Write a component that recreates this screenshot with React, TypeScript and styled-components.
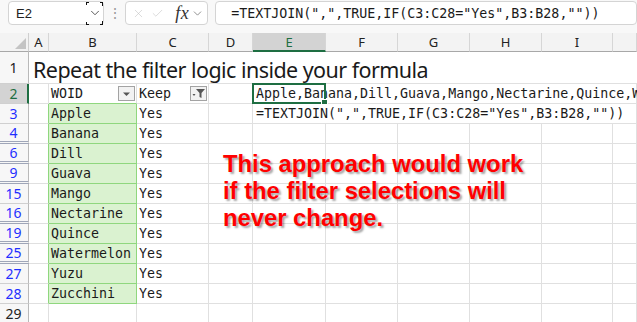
import { Fragment } from "react";
import styled, { createGlobalStyle } from "styled-components";
import { X, Check, ChevronDown } from "lucide-react";

const GREEN = "#1e6e42";
const GRID = "#e0e0e0";
const FILL = "#daf2d0";
const FILL_LINE = "#8fd77e";
const MONO = `"DejaVu Sans Mono", "Liberation Mono", monospace`;
const SANS = `"Liberation Sans", Arial, sans-serif`;

const GlobalStyle = createGlobalStyle`
  html, body {
    margin: 0;
    padding: 0;
    background: #fff;
  }
  body {
    font-family: ${SANS};
    overflow: hidden;
  }
`;

const Window = styled.div`
  position: relative;
  width: 637px;
  height: 322px;
  overflow: hidden;
  display: flex;
  flex-direction: column;
  background: #fff;
`;

/* ---------- formula bar ---------- */

const FormulaBar = styled.div`
  display: flex;
  align-items: flex-start;
  height: 33px;
  box-sizing: border-box;
  padding: 1px 0 0 8px;
  background: #f8f8f8;
  flex-shrink: 0;
`;

const Box = styled.div`
  height: 24px;
  box-sizing: border-box;
  border: 1px solid #d4d4d4;
  border-radius: 4px;
  background: #fff;
  display: flex;
  align-items: center;
`;

const NameBox = styled(Box)`
  width: 100px;
  padding-left: 7px;
  justify-content: space-between;
  font-family: ${SANS};
  font-size: 13px;
  color: #222;
`;

const DropButton = styled.div`
  width: 17px;
  height: 23px;
  display: flex;
  align-items: center;
  justify-content: center;
  color: #444;
  background:
    linear-gradient(#111, #111) left top / 3px 1px no-repeat,
    linear-gradient(#111, #111) left top / 1px 3px no-repeat,
    linear-gradient(#111, #111) left bottom / 3px 1px no-repeat,
    linear-gradient(#111, #111) left bottom / 1px 3px no-repeat,
    linear-gradient(#111, #111) right top / 3px 1px no-repeat,
    linear-gradient(#111, #111) right top / 1px 4px no-repeat,
    linear-gradient(#111, #111) right bottom / 3px 1px no-repeat,
    linear-gradient(#111, #111) right bottom / 1px 4px no-repeat;
`;

const Dots = styled.div`
  width: 22px;
  height: 24px;
  display: flex;
  align-items: center;
  justify-content: center;
  color: #9a9a9a;
  font-size: 14px;
`;

const FxBox = styled(Box)`
  width: 83px;
  padding: 0 3px 0 6px;
  gap: 6px;
  color: #bdbdbd;
`;

const Fx = styled.span`
  font-family: "Liberation Serif", "DejaVu Serif", serif;
  font-style: italic;
  font-size: 18px;
  color: #333;
  margin-left: 5px;
  letter-spacing: 0.5px;
`;

const FxChevron = styled.span`
  display: flex;
  color: #777;
  margin-left: -4px;
`;

const FormulaBox = styled(Box)`
  margin-left: 7px;
  width: 440px;
  padding-left: 15px;
  font-family: ${MONO};
  font-size: 13.3px;
  color: #1a1a1a;
  white-space: nowrap;
`;

/* ---------- sheet ---------- */

const Sheet = styled.div`
  display: grid;
  grid-template-columns: 29px 20px 88px 72px 44px 73px 72px 72px 72px 71px 1fr;
  grid-template-rows: 19px 32px repeat(12, 20px);
`;

const Corner = styled.div`
  background: #f3f3f3;
  border-right: 1px solid #cfcfcf;
  border-bottom: 1px solid #a8a8a8;
  box-sizing: border-box;
  display: flex;
  align-items: flex-end;
  justify-content: flex-end;
  padding: 0 2px 2px 0;
`;

const ColHeader = styled.div<{ $active?: boolean }>`
  box-sizing: border-box;
  background: ${(p) => (p.$active ? "#d3d3d3" : "#f3f3f3")};
  border-right: 1px solid #d6d6d6;
  border-bottom: ${(p) => (p.$active ? `2px solid ${GREEN}` : "1px solid #a8a8a8")};
  color: ${(p) => (p.$active ? GREEN : "#222")};
  font-family: "Noto Sans", ${SANS};
  font-size: 13px;
  display: flex;
  align-items: center;
  justify-content: center;
  padding-top: ${(p) => (p.$active ? "1px" : "0")};
`;

const RowHeader = styled.div<{ $active?: boolean; $filtered?: boolean; $gap?: boolean }>`
  box-sizing: border-box;
  background: ${(p) => (p.$active ? "#d3d3d3" : "#f7f7f7")};
  border-right: ${(p) => (p.$active ? `2px solid ${GREEN}` : "1px solid #b9b9b9")};
  border-bottom: ${(p) => (p.$gap ? "3px double #9fa6b8" : "1px solid #d0d0d0")};
  color: ${(p) => (p.$active ? GREEN : p.$filtered ? "#1f2fff" : "#222")};
  font-family: "Noto Sans", ${SANS};
  font-size: 14px;
  display: flex;
  align-items: center;
  justify-content: center;
  padding-right: ${(p) => (p.$active ? "0" : "1px")};
`;

const Cell = styled.div<{ $fill?: boolean; $greenRight?: boolean; $greenBottom?: boolean }>`
  position: relative;
  box-sizing: border-box;
  background: ${(p) => (p.$fill ? FILL : "#fff")};
  border-right: 1px solid ${(p) => (p.$fill || p.$greenRight ? FILL_LINE : GRID)};
  border-bottom: 1px solid ${(p) => (p.$fill || p.$greenBottom ? FILL_LINE : GRID)};
  font-family: ${MONO};
  font-size: 13.3px;
  line-height: 19px;
  color: #1a1a1a;
  padding-left: 2px;
  white-space: nowrap;
  display: flex;
  align-items: center;
`;

const HeadCell = styled(Cell)`
  justify-content: space-between;
  padding-right: 1px;
`;

const TitleCell = styled.div`
  grid-column: 2 / -1;
  box-sizing: border-box;
  border-bottom: 1px solid ${GRID};
  font-family: "Noto Sans", ${SANS};
  font-size: 21.5px;
  color: #1a1a1a;
  padding: 3px 0 0 4px;
  white-space: nowrap;
  letter-spacing: -0.55px;
`;

const SpillCell = styled(Cell)`
  grid-column: 6 / -1;
  padding-left: 3px;
  overflow: visible;
`;

const Selection = styled.div`
  position: absolute;
  left: -1px;
  top: -1px;
  width: 74px;
  height: 21px;
  box-sizing: border-box;
  border: 2px solid ${GREEN};
  pointer-events: none;

  &::after {
    content: "";
    position: absolute;
    right: -4px;
    bottom: -4px;
    width: 5px;
    height: 5px;
    background: ${GREEN};
    border: 1px solid #fff;
  }
`;

const FilterButton = styled.div`
  width: 17px;
  height: 15px;
  box-sizing: border-box;
  border: 1px solid #a3a3a3;
  background: #f2f2f2;
  display: flex;
  align-items: center;
  justify-content: center;
  color: #555;
`;

const Note = styled.div`
  position: absolute;
  left: 223px;
  top: 150px;
  font-family: ${SANS};
  font-weight: 700;
  font-size: 23.8px;
  line-height: 27px;
  color: #ff0000;
  text-shadow: 2px 2px 2px rgba(0, 0, 0, 0.35);
`;

const COLS = ["A", "B", "C", "D", "E", "F", "G", "H", "I", "J"];

const ROWS = [
  { n: 3, name: "Apple", gap: false },
  { n: 4, name: "Banana", gap: true },
  { n: 6, name: "Dill", gap: true },
  { n: 9, name: "Guava", gap: true },
  { n: 15, name: "Mango", gap: false },
  { n: 16, name: "Nectarine", gap: true },
  { n: 19, name: "Quince", gap: true },
  { n: 25, name: "Watermelon", gap: true },
  { n: 27, name: "Yuzu", gap: false },
  { n: 28, name: "Zucchini", gap: false },
];

const FORMULA = '=TEXTJOIN(",",TRUE,IF(C3:C28="Yes",B3:B28,""))';
const JOINED = ROWS.map((r) => r.name).join(",");

function DropArrow() {
  return (
    <svg width="9" height="6" viewBox="0 0 9 6">
      <path d="M1 1.5 L4.5 5 L8 1.5 Z" fill="#555" />
    </svg>
  );
}

function FilterOn() {
  return (
    <svg width="14" height="11" viewBox="0 0 14 11">
      <path d="M0.5 6 L3.5 6 L2 8 Z" fill="#555" />
      <path d="M4 1 L13 1 L9.5 5 L9.5 10 L7.5 9 L7.5 5 Z" fill="#555" />
    </svg>
  );
}

function CornerMark() {
  return (
    <svg width="11" height="11" viewBox="0 0 11 11">
      <path d="M11 0 L11 11 L0 11 Z" fill="#c4c4c4" />
    </svg>
  );
}

function BlankCells({ from, row }: { from: number; row: number }) {
  return (
    <>
      {COLS.slice(from).map((c) => (
        <Cell key={`${c}${row}`} />
      ))}
    </>
  );
}

export default function App() {
  return (
    <>
      <GlobalStyle />
      <Window>
        <FormulaBar>
          <NameBox>
            <span>E2</span>
            <DropButton>
              <ChevronDown size={14} strokeWidth={1.5} />
            </DropButton>
          </NameBox>
          <Dots>⋮</Dots>
          <FxBox>
            <X size={17} strokeWidth={1} />
            <Check size={17} strokeWidth={1} />
            <Fx>fx</Fx>
            <FxChevron>
              <ChevronDown size={13} strokeWidth={1.5} />
            </FxChevron>
          </FxBox>
          <FormulaBox>{FORMULA}</FormulaBox>
        </FormulaBar>

        <Sheet>
          <Corner>
            <CornerMark />
          </Corner>
          {COLS.map((c) => (
            <ColHeader key={c} $active={c === "E"}>
              {c === "J" ? "" : c}
            </ColHeader>
          ))}

          <RowHeader>1</RowHeader>
          <TitleCell>Repeat the filter logic inside your formula</TitleCell>

          <RowHeader $active>2</RowHeader>
          <Cell />
          <HeadCell $greenBottom>
            WOID
            <FilterButton>
              <DropArrow />
            </FilterButton>
          </HeadCell>
          <HeadCell>
            Keep
            <FilterButton>
              <FilterOn />
            </FilterButton>
          </HeadCell>
          <Cell />
          <SpillCell>
            {JOINED}
            <Selection />
          </SpillCell>

          {ROWS.map((r) => (
            <Fragment key={r.n}>
              <RowHeader $filtered $gap={r.gap}>
                {r.n}
              </RowHeader>
              <Cell $greenRight />
              <Cell $fill>{r.name}</Cell>
              <Cell>Yes</Cell>
              <Cell />
              {r.n === 3 ? <SpillCell>{FORMULA}</SpillCell> : <BlankCells from={4} row={r.n} />}
            </Fragment>
          ))}

          <RowHeader>29</RowHeader>
          <BlankCells from={0} row={29} />
        </Sheet>

        <Note>
          This approach would work
          <br />
          if the filter selections will
          <br />
          never change.
        </Note>
      </Window>
    </>
  );
}
